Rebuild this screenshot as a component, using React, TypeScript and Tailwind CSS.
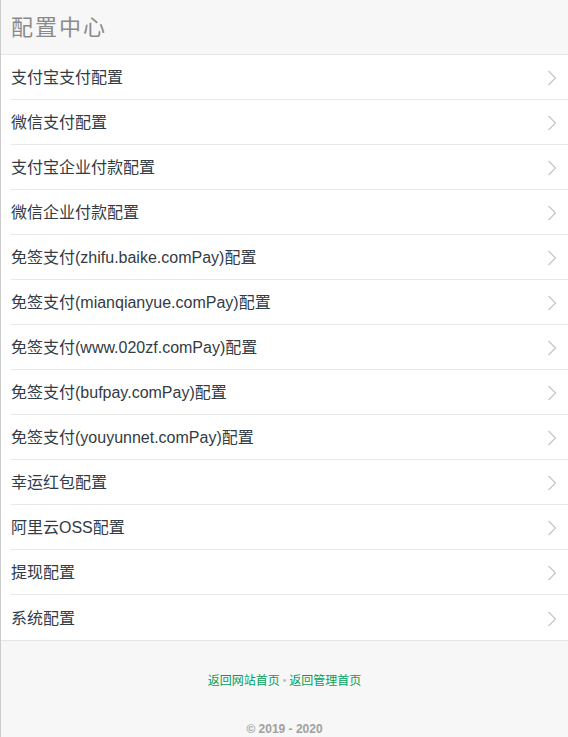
import React from "react";

const items = [
  "支付宝支付配置",
  "微信支付配置",
  "支付宝企业付款配置",
  "微信企业付款配置",
  "免签支付(zhifu.baike.comPay)配置",
  "免签支付(mianqianyue.comPay)配置",
  "免签支付(www.020zf.comPay)配置",
  "免签支付(bufpay.comPay)配置",
  "免签支付(youyunnet.comPay)配置",
  "幸运红包配置",
  "阿里云OSS配置",
  "提现配置",
  "系统配置",
];

const font = { fontFamily: '"Liberation Sans", Arial, "Noto Sans CJK SC", sans-serif' };

function Chevron() {
  return (
    <svg width="10" height="16" viewBox="0 0 10 16" className="shrink-0">
      <polyline points="1.5,1 8.5,8 1.5,15" fill="none" stroke="#c7c7cc" strokeWidth="1.3" />
    </svg>
  );
}

export default function App() {
  return (
    <div className="min-h-[737px] bg-[#f7f7f7] border-l border-[#cccccc]" style={font}>
      <div className="h-[55px] flex items-center pl-[10px] pt-[1px] border-b border-[#e5e5e5] bg-[#f7f7f7]">
        <h1 className="text-[22px] tracking-[2px] text-[#8a8a8a] font-normal leading-none">配置中心</h1>
      </div>
      <ul className="bg-white border-b border-[#e5e5e5]">
        {items.map((t, i) => (
          <li key={i} className="pl-[10px]">
            <div
              className={
                "h-[45px] pt-[2px] flex items-center justify-between pr-[11px] " +
                (i < items.length - 1 ? "border-b border-[#e8e8e8]" : "")
              }
            >
              <span className="text-[16px] text-[#333b45]">{t}</span>
              <Chevron />
            </div>
          </li>
        ))}
      </ul>
      <div className="pt-[31px] pb-[10px] flex flex-col items-center">
        <div className="text-[12px] leading-[18px] flex items-center">
          <a className="text-[#00a05a]">返回网站首页</a>
          <span className="mx-[3px] text-[#bbbbbb] text-[10px]">•</span>
          <a className="text-[#00a05a]">返回管理首页</a>
        </div>
        <div className="mt-[30px] text-[12px] leading-[18px] font-bold text-[#a0a0a0]">© 2019 - 2020</div>
      </div>
    </div>
  );
}
